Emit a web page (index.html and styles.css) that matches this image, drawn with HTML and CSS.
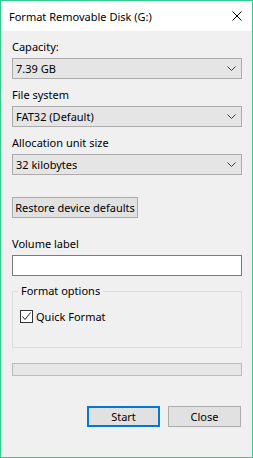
FILE: index.html
```html
<!DOCTYPE html>
<html lang="en">
<head>
    <meta charset="UTF-8">
    <meta name="viewport" content="width=device-width, initial-scale=1.0">
    <title>Format Removable Disk (G:)</title>
    <link rel="stylesheet" href="styles.css">
</head>
<body>
    <div class="window">
        <div class="titlebar">
            <span class="title">Format Removable Disk (G:)</span>
            <svg class="close-x" width="10" height="10" viewBox="0 0 10 10">
                <path d="M0.5 0.5 L9.5 9.5 M9.5 0.5 L0.5 9.5" stroke="#000" stroke-width="1" fill="none"/>
            </svg>
        </div>
        <div class="content">
            <div class="field first">
                <div class="label">Capacity:</div>
                <div class="combo">
                    <span>7.39 GB</span>
                    <svg class="chevron" width="9" height="5" viewBox="0 0 9 5"><path d="M0.5 0.5 L4.5 4.5 L8.5 0.5" stroke="#404040" fill="none"/></svg>
                </div>
            </div>
            <div class="field">
                <div class="label">File system</div>
                <div class="combo">
                    <span>FAT32 (Default)</span>
                    <svg class="chevron" width="9" height="5" viewBox="0 0 9 5"><path d="M0.5 0.5 L4.5 4.5 L8.5 0.5" stroke="#404040" fill="none"/></svg>
                </div>
            </div>
            <div class="field">
                <div class="label">Allocation unit size</div>
                <div class="combo">
                    <span>32 kilobytes</span>
                    <svg class="chevron" width="9" height="5" viewBox="0 0 9 5"><path d="M0.5 0.5 L4.5 4.5 L8.5 0.5" stroke="#404040" fill="none"/></svg>
                </div>
            </div>
            <div class="btn restore">Restore device defaults</div>
            <div class="field volume">
                <div class="label">Volume label</div>
                <div class="textbox"></div>
            </div>
            <div class="options">
                <span class="legend">Format options</span>
                <div class="check-row">
                    <span class="checkbox">
                        <svg width="11" height="11" viewBox="0 0 11 11"><path d="M1.5 5.5 L4 8.5 L9.5 1.5" stroke="#222" stroke-width="1" fill="none"/></svg>
                    </span>
                    <span>Quick Format</span>
                </div>
            </div>
            <div class="progress"></div>
            <div class="actions">
                <div class="btn start">Start</div>
                <div class="btn">Close</div>
            </div>
        </div>
    </div>
</body>
</html>
```

FILE: styles.css
```css
html, body {
    margin: 0;
    padding: 0;
}
body {
    font-family: "Noto Sans", "Open Sans", sans-serif;
    font-size: 11px;
    color: #000;
    white-space: nowrap;
}
.window {
    width: 253px;
    height: 458px;
    box-sizing: border-box;
    border: 1px solid #2fcc8b;
    background-color: #f0f0f0;
}
.titlebar {
    height: 30px;
    background-color: #fff;
    display: flex;
    align-items: center;
    justify-content: space-between;
    padding: 0 10px 0 8px;
}
.title {
    font-size: 11px;
}
.close-x {
    display: block;
}
.content {
    padding: 0 10px 0 11px;
}
.field {
    margin-top: 8px;
}
.label {
    height: 15px;
    line-height: 15px;
    margin-bottom: 4px;
}
.combo {
    height: 21px;
    box-sizing: border-box;
    border: 1px solid #acacac;
    background-color: #e5e5e5;
    display: flex;
    align-items: center;
    justify-content: space-between;
    padding: 0 5px 0 3px;
}
.chevron {
    display: block;
}
.btn {
    height: 21px;
    box-sizing: border-box;
    border: 1px solid #adadad;
    background-color: #e1e1e1;
    display: flex;
    align-items: center;
    justify-content: center;
}
.restore {
    width: 126px;
    margin-top: 22px;
}
.field.volume {
    margin-top: 18px;
}
.textbox {
    height: 21px;
    box-sizing: border-box;
    border: 1px solid #7a7a7a;
    background-color: #fff;
}
.options {
    position: relative;
    margin-top: 15px;
    height: 57px;
    box-sizing: border-box;
    border: 1px solid #dcdcdc;
    padding: 17px 0 0 7px;
}
.legend {
    position: absolute;
    top: -9px;
    left: 5px;
    padding: 0 3px;
    background-color: #f0f0f0;
    line-height: 15px;
}
.check-row {
    display: flex;
    align-items: center;
    gap: 3px;
}
.checkbox {
    width: 13px;
    height: 13px;
    box-sizing: border-box;
    border: 1px solid #333;
    background-color: #fff;
    display: flex;
    align-items: center;
    justify-content: center;
}
.checkbox svg {
    display: block;
}
.progress {
    margin-top: 15px;
    height: 13px;
    box-sizing: border-box;
    border: 1px solid #bcbcbc;
    background-color: #e6e6e6;
}
.actions {
    margin-top: 30px;
    display: flex;
    justify-content: flex-end;
    gap: 8px;
    padding-right: 1px;
}
.actions .btn {
    width: 73px;
    height: 21px;
}
.actions .start {
    border: 2px solid #0078d7;
}
```
